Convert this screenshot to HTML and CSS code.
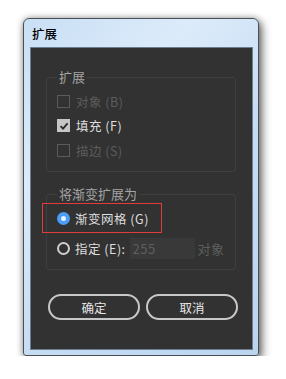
FILE: index.html
```html
<!DOCTYPE html>
<html lang="zh">
<head>
<meta charset="utf-8">
<link rel="stylesheet" href="styles.css">
</head>
<body>
<div class="window">
  <div class="titlebar">扩展</div>
  <div class="content">
    <fieldset class="group g1">
      <legend>扩展</legend>
      <div class="row disabled"><span class="cb"></span>对象 (B)</div>
      <div class="row"><span class="cb checked"><svg width="10" height="10" viewBox="0 0 10 10"><path d="M1.5 5.2 L4 7.6 L8.6 2.4" fill="none" stroke="#2a2a2a" stroke-width="1.8"/></svg></span>填充 (F)</div>
      <div class="row disabled"><span class="cb"></span>描边 (S)</div>
    </fieldset>
    <fieldset class="group g2">
      <legend>将渐变扩展为</legend>
      <div class="row radio-row highlight"><span class="rb on"></span>渐变网格 (G)</div>
      <div class="row radio-row"><span class="rb"></span>指定 (E):<span class="input">255</span><span class="unit">对象</span></div>
    </fieldset>
    <div class="buttons">
      <div class="btn">确定</div>
      <div class="btn">取消</div>
    </div>
  </div>
</div>
</body>
</html>
```
FILE: styles.css
```css
html, body {
  margin: 0;
  padding: 0;
  background: #ffffff;
}
body {
  font-family: "Noto Sans CJK SC", "Noto Sans", sans-serif;
  font-size: 12px;
}
.window {
  margin: 18px 0 0 23px;
  width: 236px;
  height: 338px;
  box-sizing: border-box;
  border: 1px solid #4a4f55;
  border-radius: 6px 6px 3px 3px;
  background: linear-gradient(135deg, #c9dff5 0%, #dcebfa 30%, #c6dcf3 60%, #bcd5ef 100%);
  box-shadow: 3px 4px 10px rgba(0,0,0,0.55), 0 0 6px rgba(0,0,0,0.3);
  padding: 0 5px 5px 6px;
  display: flex;
  flex-direction: column;
}
.titlebar {
  height: 28px;
  line-height: 30px;
  padding-left: 2px;
  color: #000;
  font-size: 12.5px;
  font-weight: 500;
}
.content {
  flex: 1;
  background: #323232;
  border: 1px solid #6b7d90;
  display: flex;
  flex-direction: column;
  padding: 0 0 0 15px;
}
.group {
  margin: 0;
  width: 190px;
  box-sizing: border-box;
  border: 1px solid #3f3f3f;
  border-radius: 3px;
  padding: 0 0 0 10px;
  min-width: 0;
}
.group legend {
  color: #a3a3a3;
  font-size: 13px;
  padding: 0 2px;
  margin-left: 0;
  line-height: 16px;
}
.g1 {
  margin-top: 21px;
  height: 103px;
  padding-top: 4px;
}
.g2 {
  margin-top: 14px;
  height: 84px;
  padding-top: 0;
}
.row {
  display: flex;
  align-items: center;
  height: 24.5px;
  color: #dedede;
  font-size: 12.5px;
  letter-spacing: 0.5px;
  white-space: nowrap;
}
.row.disabled {
  color: #5c5c5c;
}
.cb {
  width: 11px;
  height: 11px;
  border: 1px solid #5a5a5a;
  margin-right: 6px;
  display: flex;
  align-items: center;
  justify-content: center;
}
.cb.checked {
  background: #c6c6c6;
  border-color: #c6c6c6;
}
.radio-row {
  height: 30px;
}
.highlight {
  margin-left: -15px;
  padding-left: 14px;
  width: 104px;
  border: 1px solid #e23b3b;
  height: 28px;
  margin-top: 1px;
}
.rb {
  width: 9px;
  height: 9px;
  border: 2px solid #cfcfcf;
  border-radius: 50%;
  margin-right: 5px;
}
.rb.on {
  width: 5px;
  height: 5px;
  border: 4px solid #4b9df5;
  background: #e6f1ff;
}
.input {
  margin-left: 4px;
  width: 65px;
  height: 21px;
  background: #393939;
  color: #5e5e5e;
  line-height: 21px;
  padding-left: 3px;
  box-sizing: border-box;
  font-size: 13px;
}
.unit {
  margin-left: 3px;
  color: #5e5e5e;
  font-size: 13px;
}
.buttons {
  display: flex;
  gap: 6px;
  margin-top: 24px;
  padding-left: 2px;
}
.btn {
  width: 92px;
  height: 26px;
  box-sizing: border-box;
  border: 2px solid #c8c8c8;
  border-radius: 13px;
  color: #e4e4e4;
  display: flex;
  align-items: center;
  justify-content: center;
  font-size: 12.5px;
}
```
